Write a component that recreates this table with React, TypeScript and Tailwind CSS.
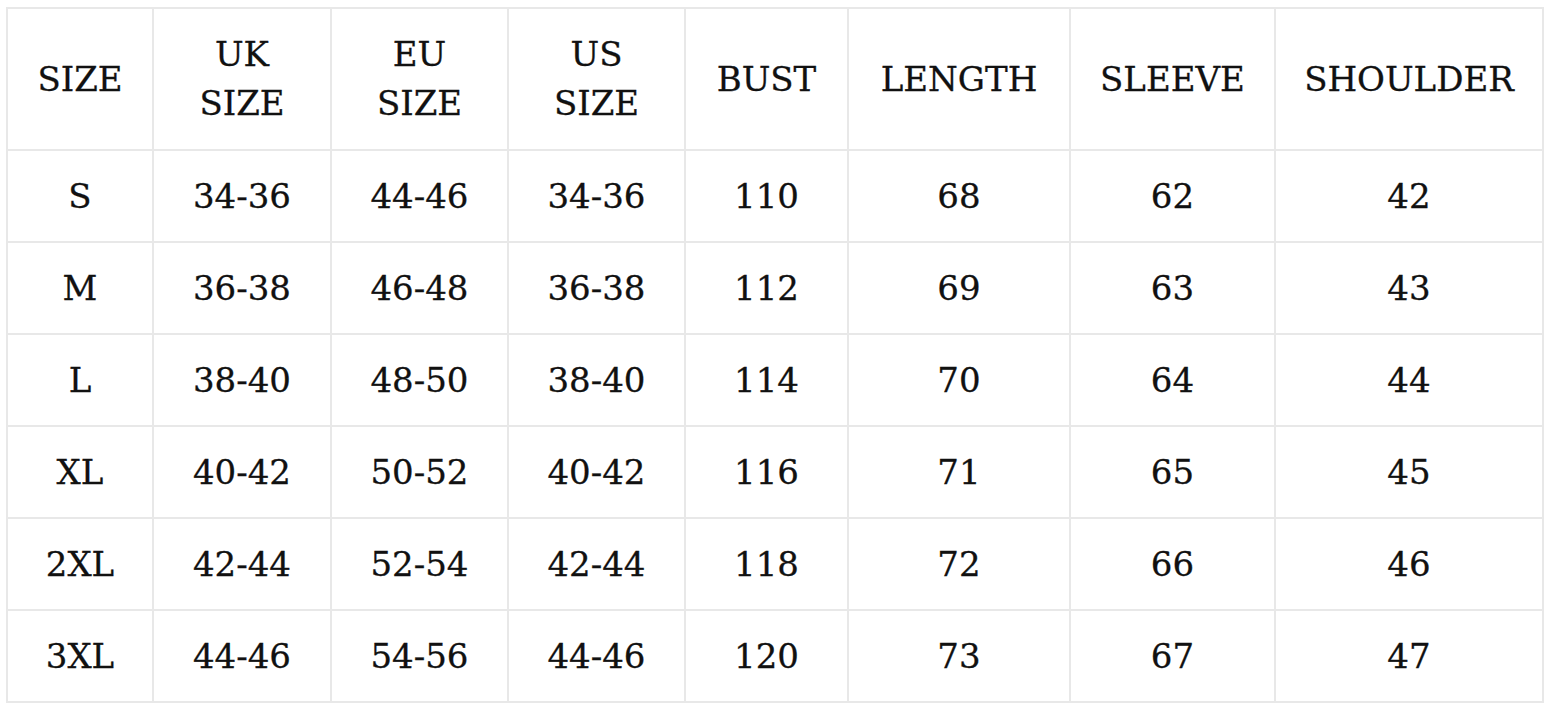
import React from "react";

const headers: string[][] = [
  ["SIZE"],
  ["UK", "SIZE"],
  ["EU", "SIZE"],
  ["US", "SIZE"],
  ["BUST"],
  ["LENGTH"],
  ["SLEEVE"],
  ["SHOULDER"],
];

const rows: string[][] = [
  ["S", "34-36", "44-46", "34-36", "110", "68", "62", "42"],
  ["M", "36-38", "46-48", "36-38", "112", "69", "63", "43"],
  ["L", "38-40", "48-50", "38-40", "114", "70", "64", "44"],
  ["XL", "40-42", "50-52", "40-42", "116", "71", "65", "45"],
  ["2XL", "42-44", "52-54", "42-44", "118", "72", "66", "46"],
  ["3XL", "44-46", "54-56", "44-46", "120", "73", "67", "47"],
];

export default function App() {
  return (
    <div className="w-[1552px] h-[712px] bg-white pt-[7px] pl-[6px]">
      <div
        className="inline-grid grid-cols-[144px_176px_175px_175px_161px_220px_203px_266px] grid-rows-[140px_repeat(6,90px)] gap-[2px] p-[2px] bg-[#e8e8e8] text-[#111] text-[34px] [-webkit-text-stroke:0.3px_#111]"
        style={{ fontFamily: '"DejaVu Serif", "Liberation Serif", serif' }}
      >
        {headers.map((h, i) => (
          <div
            key={i}
            className={`bg-white flex flex-col items-center justify-center ${h.length > 1 ? "leading-[49px] pb-[1px]" : "leading-[40px]"}`}
          >
            {h.map((t, j) => (
              <span key={j}>{t}</span>
            ))}
          </div>
        ))}
        {rows.map((r, ri) =>
          r.map((c, ci) => (
            <div key={`${ri}-${ci}`} className="bg-white flex items-center justify-center">
              {c}
            </div>
          ))
        )}
      </div>
    </div>
  );
}
